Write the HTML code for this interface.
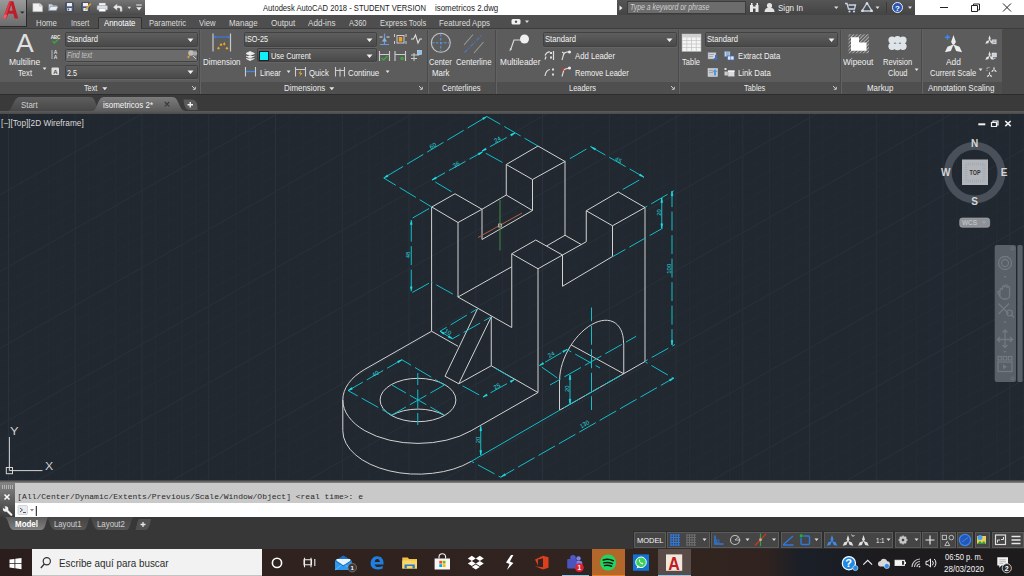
<!DOCTYPE html>
<html><head><meta charset="utf-8"><title>AutoCAD</title>
<style>
*{box-sizing:border-box;margin:0;padding:0}
html,body{width:1024px;height:576px;overflow:hidden;background:#333}
body{position:relative;font-family:"Liberation Sans","DejaVu Sans",sans-serif;font-size:9px;color:#e6e6e6}
.a{position:absolute}
.t{position:absolute;white-space:nowrap;line-height:1}
/* title */
#qat{left:0;top:0;width:145px;height:16px;background:linear-gradient(#747474,#4a4a4a);border-bottom:1px solid #333}
#title{left:145px;top:0;width:472px;height:15px;background:#fff}
#srch{left:617px;top:0;width:298px;height:15px;background:linear-gradient(#555,#444)}
#wctl{left:915px;top:0;width:109px;height:15px;background:#fff}
#menu{left:0;top:15px;width:1024px;height:14px;background:#4e4e4e}
#appbtn{left:0;top:0;width:27px;height:27px;background:linear-gradient(#9a9a9a,#6c6c6c);border-right:1px solid #2a2a2a;border-bottom:1px solid #2a2a2a}
#ribbon{left:0;top:28px;width:1024px;height:67px;background:#5c5c5c;border-top:1px solid #3c3c3c}
#ribt{left:0;top:81.5px;width:1002px;height:12.5px;background:#4f4f4f}
#tabs{left:0;top:94px;width:1024px;height:20px;background:#3a3a3a}
#draw{left:0;top:114px;width:1024px;height:366px;background:#212830}
#cmd1{left:0;top:483px;width:1024px;height:20px;background:#c9c9c9}
#cmd2{left:15px;top:503px;width:1009px;height:14px;background:#fff}
#cmdh{left:0;top:483px;width:15px;height:34px;background:linear-gradient(#848484,#3c3c3c)}
#lay{left:0;top:517px;width:1024px;height:32px;background:#373737}
#task{left:0;top:549px;width:1024px;height:27px;background:linear-gradient(90deg,#2a1d1b 0,#2f221f 262px,#32241f 700px,#30231f 765px,#1b1f27 800px,#1a1d24 835px,#1d1b1e 880px,#1e1b1d 1024px)}
.sep{position:absolute;top:29px;width:1px;height:65px;background:#444}
.dd{position:absolute;height:11px;background:linear-gradient(#4c4c4c,#3e3e3e);border:1px solid #333;border-radius:1px}
.dd i{position:absolute;right:3px;top:4px;border:2.5px solid transparent;border-top:3px solid #eee;border-bottom:0}
.mt{position:absolute;top:17px;font-size:9px;color:#ddd;white-space:nowrap;line-height:10px}
.pt{position:absolute;top:83px;font-size:8.5px;color:#e8e8e8;white-space:nowrap;line-height:10px}
.rb{position:absolute;font-size:8.5px;color:#eee;white-space:nowrap;line-height:10px}
</style></head><body>
<div class="a" id="qat"></div>
<div class="a" id="title"></div>
<div class="a" id="srch"></div>
<div class="a" id="wctl"></div>
<div class="a" id="menu"></div>
<div class="a" id="ribbon"></div>
<div class="a" id="ribt"></div>
<div class="a" id="tabs"></div>
<div class="a" id="draw"></div>
<div class="a" id="cmd1"></div>
<div class="a" id="cmd2"></div>
<div class="a" id="cmdh"></div>
<div class="a" id="lay"></div>
<div class="a" id="task"></div>
<div class="a" id="appbtn"></div>
<svg class="a" style="left:0;top:0" width="145" height="28" viewBox="0 0 145 28">
 <path d="M2.800 18.600 L9.300 1.300 L13.300 1.300 L18.200 18.600 L14.600 18.600 L13.400 13.800 L8.300 13.800 L6.600 18.600 Z M9.300 10.800 L12.700 10.800 L11.300 4.800 Z" fill="#c01c28" fill-rule="evenodd"/>
 <path d="M2.800 18.600 L9.300 1.300 L11 1.300 L5.500 18.600Z" fill="#dc3a44"/>
 <path d="M2.800 18.600l1.500-4 2.800.5-1 3.500z" fill="#e8606a"/>
 <path d="M20 11.400h4.600l-2.300 2.400z" fill="#2a2a2a"/>
 <path d="M32.800 3.300h6.800l3 2.800v5.600h-9.800z" fill="#f2f2f2" stroke="#a0a0a0" stroke-width=".5"/><path d="M39.600 3.300v2.800h3" fill="#ddd" stroke="#999" stroke-width=".4"/>
 <path d="M48.500 4h3.500l1 1.300h4v5h-8.500z" fill="#c8d0da" stroke="#6a7684" stroke-width=".5"/><path d="M48.500 10.400l2.200-4h7.600l-2.200 4z" fill="#e8eef4" stroke="#6a7684" stroke-width=".5"/>
 <rect x="65.500" y="2.600" width="8" height="8.600" rx=".8" fill="#4c5c78" stroke="#2d3a50" stroke-width=".5"/><rect x="67" y="3" width="5" height="3.300" fill="#f0f0f0"/><rect x="67.300" y="8" width="4.400" height="3" fill="#e4e6ee"/><rect x="68" y="8.600" width="1.200" height="1.800" fill="#4c5c78"/>
 <rect x="81.500" y="2.600" width="8" height="8.600" rx=".8" fill="#4c5c78" stroke="#2d3a50" stroke-width=".5"/><rect x="83" y="3" width="5" height="3.300" fill="#f0f0f0"/><rect x="83.300" y="8" width="4.400" height="3" fill="#e4e6ee"/><path d="M85.500 8.500l4.500-5.500 1.300 1-4.500 5.500-1.800.6z" fill="#eaa030"/>
 <rect x="99" y="3" width="6.600" height="3" fill="#f6f6f6" stroke="#999" stroke-width=".4"/><rect x="97" y="5.500" width="10.600" height="4.500" rx="1" fill="#d8dee6" stroke="#8a94a2" stroke-width=".5"/><rect x="99" y="8.300" width="6.600" height="3.200" fill="#fff" stroke="#999" stroke-width=".4"/>
 <path d="M113 7.200l4.200-3.600v2.200h2.600q2.400 0 2.400 2.600v3h-2.200v-2.400q0-1-1-1h-1.800v2.600z" fill="#eaeaea" stroke="#777" stroke-width=".4"/>
 <path d="M127.500 6.800h3.600l-1.800 2.200z" fill="#ddd"/>
 <path d="M136.200 4.500h5.600v1.100h-5.600z M136.200 7.200h5.600l-2.800 3.200z" fill="#f0f0f0"/>
</svg>
<div class="a" style="left:627px;top:1px;width:119px;height:13px;background:#6c6c6c;border:1px solid #3c3c3c"></div>
<svg class="a" style="left:617px;top:0" width="298" height="15" viewBox="617 0 298 15">
 <path d="M619.500 5.500l3 2.500-3 2.500z" fill="#eee"/>
 <path d="M750 5h3v7h-3z M755.500 5h3v7h-3z M751 3h1.500v2h-1.500z M756.500 3h1.500v2h-1.500z M753 6.500h2.500v2h-2.500z" fill="#e8e8e8"/>
 <circle cx="769.500" cy="5.500" r="2.600" fill="#e4e4e4"/><path d="M764.500 12q0-4.500 5-4.500t5 4.500z" fill="#e4e4e4"/>
 <path d="M834 6.500h4.500l-2.250 2.500z" fill="#ddd"/>
 <path d="M845 3.500h2l1.500 5.500h6l1-4h-7" fill="none" stroke="#c8d4e8" stroke-width="1.300"/><circle cx="849.500" cy="11.500" r="1.100" fill="#c8d4e8"/><circle cx="854" cy="11.500" r="1.100" fill="#c8d4e8"/>
 <path d="M867 3l5 8h-10z" fill="none" stroke="#c0cce0" stroke-width="1.400"/><circle cx="867" cy="3.500" r="1.300" fill="#d8e0f0"/><circle cx="862.500" cy="10.800" r="1.300" fill="#d8e0f0"/><circle cx="871.500" cy="10.800" r="1.300" fill="#d8e0f0"/>
 <path d="M875.500 6.500h4l-2 2.500z" fill="#ddd"/>
 <path d="M886.500 2v11" stroke="#3a3a3a" stroke-width="1"/>
 <circle cx="897.500" cy="7.500" r="5" fill="#2b57b0" stroke="#e8eefc" stroke-width="1"/>
 <text x="897.500" y="10.500" font-family="Liberation Sans,sans-serif" font-weight="bold" font-size="8" fill="#fff" text-anchor="middle">?</text>
 <path d="M908 6.500h4l-2 2.500z" fill="#ddd"/>
</svg>
<svg class="a" style="left:915px;top:0" width="109" height="15" viewBox="915 0 109 15">
 <path d="M940 7.500h8" stroke="#222" stroke-width="1"/>
 <path d="M971.500 5.500h6v6h-6z M973.500 5.500v-1.500h6v6h-2" fill="none" stroke="#222" stroke-width="1"/>
 <path d="M1003 3.500l8 8M1011 3.500l-8 8" stroke="#222" stroke-width="1"/>
</svg>
<div class="t" style="left:263.00px;top:4.15px;font-size:8.80px;color:#1a1a1a;transform:scaleX(0.8641);transform-origin:0 0;">Autodesk AutoCAD 2018 - STUDENT VERSION</div>
<div class="t" style="left:434.75px;top:4.15px;font-size:8.80px;color:#1a1a1a;transform:scaleX(0.8981);transform-origin:0 0;">isometricos 2.dwg</div>
<div class="t" style="left:629.50px;top:4.46px;font-size:8.20px;color:#cfcfcf;font-style:italic;transform:scaleX(0.8440);transform-origin:0 0;">Type a keyword or phrase</div>
<div class="t" style="left:778.00px;top:4.15px;font-size:8.80px;color:#ececec;transform:scaleX(0.9125);transform-origin:0 0;">Sign In</div>

<div class="a" style="left:98px;top:17px;width:44px;height:12px;background:#5c5c5c;border:1px solid #333;border-bottom:0;border-radius:2px 2px 0 0"></div>
<div class="t" style="left:36.25px;top:18.95px;font-size:8.80px;color:#dcdcdc;transform:scaleX(0.8925);transform-origin:0 0;">Home</div>
<div class="t" style="left:71.25px;top:18.95px;font-size:8.80px;color:#dcdcdc;transform:scaleX(0.8292);transform-origin:0 0;">Insert</div>
<div class="t" style="left:103.75px;top:18.95px;font-size:8.80px;color:#fff;transform:scaleX(0.8927);transform-origin:0 0;">Annotate</div>
<div class="t" style="left:149.00px;top:18.95px;font-size:8.80px;color:#dcdcdc;transform:scaleX(0.8697);transform-origin:0 0;">Parametric</div>
<div class="t" style="left:199.30px;top:18.95px;font-size:8.80px;color:#dcdcdc;transform:scaleX(0.8723);transform-origin:0 0;">View</div>
<div class="t" style="left:229.20px;top:18.95px;font-size:8.80px;color:#dcdcdc;transform:scaleX(0.8993);transform-origin:0 0;">Manage</div>
<div class="t" style="left:270.50px;top:18.95px;font-size:8.80px;color:#dcdcdc;transform:scaleX(0.9180);transform-origin:0 0;">Output</div>
<div class="t" style="left:308.00px;top:18.95px;font-size:8.80px;color:#dcdcdc;transform:scaleX(0.9216);transform-origin:0 0;">Add-ins</div>
<div class="t" style="left:348.50px;top:18.95px;font-size:8.80px;color:#dcdcdc;transform:scaleX(0.8515);transform-origin:0 0;">A360</div>
<div class="t" style="left:379.75px;top:18.95px;font-size:8.80px;color:#dcdcdc;transform:scaleX(0.8468);transform-origin:0 0;">Express Tools</div>
<div class="t" style="left:439.25px;top:18.95px;font-size:8.80px;color:#dcdcdc;transform:scaleX(0.8910);transform-origin:0 0;">Featured Apps</div>
<svg class="a" style="left:508px;top:15px" width="30" height="14" viewBox="508 15 30 14"><rect x="511.500" y="19" width="9" height="5.500" rx="1.500" fill="#f0f0f0"/><circle cx="516" cy="21.700" r="1.200" fill="#555"/><path d="M525 20.500h4l-2 2.500z" fill="#ddd"/></svg>

<div class="a" style="left:199.0px;top:30px;width:1px;height:64px;background:#4a4a4a;box-shadow:1px 0 0 #626262"></div>
<div class="a" style="left:427.0px;top:30px;width:1px;height:64px;background:#4a4a4a;box-shadow:1px 0 0 #626262"></div>
<div class="a" style="left:495.0px;top:30px;width:1px;height:64px;background:#4a4a4a;box-shadow:1px 0 0 #626262"></div>
<div class="a" style="left:677.5px;top:30px;width:1px;height:64px;background:#4a4a4a;box-shadow:1px 0 0 #626262"></div>
<div class="a" style="left:840.0px;top:30px;width:1px;height:64px;background:#4a4a4a;box-shadow:1px 0 0 #626262"></div>
<div class="a" style="left:921.0px;top:30px;width:1px;height:64px;background:#4a4a4a;box-shadow:1px 0 0 #626262"></div>
<div class="a" style="left:1002.0px;top:30px;width:1px;height:64px;background:#4a4a4a;box-shadow:1px 0 0 #626262"></div>
<div class="a" style="left:1003px;top:29px;width:21px;height:65px;background:#4a4a4a"></div>
<div class="t" style="left:15.50px;top:31.31px;font-size:25.50px;color:#e0e0e0;transform:scaleX(1.0406);transform-origin:0 0;">A</div>
<div class="t" style="left:9.25px;top:58.25px;font-size:8.80px;color:#f0f0f0;transform:scaleX(0.9681);transform-origin:0 0;">Multiline</div>
<div class="t" style="left:18.00px;top:68.85px;font-size:8.80px;color:#f0f0f0;transform:scaleX(0.8675);transform-origin:0 0;">Text</div>
<svg class="a" style="left:41.9px;top:67.1px" width="6" height="4" viewBox="0 0 6 4"><path d="M0.700 0.400h3.800l-1.900 2.500z" fill="#e4e4e4"/></svg>
<div class="a" style="left:64.5px;top:31.6px;width:133.0px;height:15.0px;background:linear-gradient(#5e5e5e,#494949);border:1px solid #424242;border-radius:1.5px;box-shadow:0 1px 0 #646464"></div><svg class="a" style="left:187.0px;top:37.6px" width="8" height="5" viewBox="0 0 8 5"><path d="M0.500 0.500h6l-3 3.500z" fill="#f2f2f2"/></svg>
<div class="t" style="left:66.50px;top:35.45px;font-size:8.80px;color:#f4f4f4;transform:scaleX(0.8679);transform-origin:0 0;">Standard</div>
<div class="a" style="left:64.5px;top:48.5px;width:133.0px;height:13.5px;background:#6b6b6b;border:1px solid #424242;border-radius:1.5px;box-shadow:0 1px 0 #646464"></div>
<div class="t" style="left:67.00px;top:51.96px;font-size:8.20px;color:#c4c4c4;font-style:italic;transform:scaleX(0.7950);transform-origin:0 0;">Find text</div>
<div class="a" style="left:64.5px;top:64.5px;width:133.0px;height:14.5px;background:linear-gradient(#5e5e5e,#494949);border:1px solid #424242;border-radius:1.5px;box-shadow:0 1px 0 #646464"></div><svg class="a" style="left:187.0px;top:70.2px" width="8" height="5" viewBox="0 0 8 5"><path d="M0.500 0.500h6l-3 3.500z" fill="#f2f2f2"/></svg>
<div class="t" style="left:67.00px;top:68.85px;font-size:8.80px;color:#f4f4f4;transform:scaleX(0.8174);transform-origin:0 0;">2.5</div>
<div class="t" style="left:84.25px;top:84.15px;font-size:8.80px;color:#ececec;transform:scaleX(0.8210);transform-origin:0 0;">Text</div>
<svg class="a" style="left:102.4px;top:87.1px" width="6" height="4" viewBox="0 0 6 4"><path d="M0.300 0.300h5l-2.500 3z" fill="#e4e4e4"/></svg>
<svg class="a" style="left:191.0px;top:85.0px" width="6" height="6" viewBox="0 0 6 6"><path d="M1 1L3.800 3.800M4.300 1.800v2.500h-2.500" stroke="#d8d8d8" stroke-width=".9" fill="none"/></svg>
<svg class="a" style="left:48px;top:30px" width="150" height="50" viewBox="48 30 150 50">
<text x="55.500" y="38.500" font-family="Liberation Sans,sans-serif" font-weight="bold" font-size="4.500" fill="#eee" text-anchor="middle">ABC</text>
<path d="M52.500 41l2 2 4-4" stroke="#3aa83a" stroke-width="1.400" fill="none"/>
<text x="55.500" y="53.500" font-family="Liberation Sans,sans-serif" font-weight="bold" font-size="5" fill="#ddd" text-anchor="middle">A</text>
<text x="55.500" y="59" font-family="Liberation Sans,sans-serif" font-weight="bold" font-size="5" fill="#ddd" text-anchor="middle">A</text>
<path d="M52 50v9" stroke="#ccc" stroke-width=".8"/>
<rect x="51.500" y="67.500" width="7.500" height="7.500" rx="1" fill="#ddd"/><text x="55.300" y="74" font-family="Liberation Sans,sans-serif" font-weight="bold" font-size="6" fill="#444" text-anchor="middle">A</text>
<circle cx="191" cy="53" r="2.800" fill="#bbb"/><circle cx="195" cy="53.500" r="2.300" fill="#aaa"/><path d="M187 57l3-2.500-1 4z" fill="#f0a020"/><path d="M193 56l3 3" stroke="#ccc" stroke-width="1"/>
</svg>
<div class="t" style="left:202.75px;top:58.25px;font-size:8.80px;color:#f0f0f0;transform:scaleX(0.9020);transform-origin:0 0;">Dimension</div>
<div class="a" style="left:243.5px;top:31.6px;width:133.0px;height:15.0px;background:linear-gradient(#5e5e5e,#494949);border:1px solid #424242;border-radius:1.5px;box-shadow:0 1px 0 #646464"></div><svg class="a" style="left:366.0px;top:37.6px" width="8" height="5" viewBox="0 0 8 5"><path d="M0.500 0.500h6l-3 3.500z" fill="#f2f2f2"/></svg>
<div class="t" style="left:245.30px;top:35.45px;font-size:8.80px;color:#f4f4f4;transform:scaleX(0.8250);transform-origin:0 0;">ISO-25</div>
<div class="a" style="left:256.5px;top:48.0px;width:120.0px;height:14.0px;background:linear-gradient(#5e5e5e,#494949);border:1px solid #424242;border-radius:1.5px;box-shadow:0 1px 0 #646464"></div><svg class="a" style="left:366.0px;top:53.5px" width="8" height="5" viewBox="0 0 8 5"><path d="M0.500 0.500h6l-3 3.500z" fill="#f2f2f2"/></svg>
<div class="a" style="left:258.5px;top:50.5px;width:10px;height:10px;background:#10f0f8;border:.5px solid #222"></div>
<div class="t" style="left:270.50px;top:51.95px;font-size:8.80px;color:#f4f4f4;transform:scaleX(0.8390);transform-origin:0 0;">Use Current</div>
<div class="t" style="left:260.00px;top:68.55px;font-size:8.80px;color:#f0f0f0;transform:scaleX(0.8503);transform-origin:0 0;">Linear</div>
<svg class="a" style="left:286.4px;top:70.1px" width="6" height="4" viewBox="0 0 6 4"><path d="M0.700 0.400h3.800l-1.900 2.500z" fill="#e4e4e4"/></svg>
<div class="t" style="left:309.00px;top:68.55px;font-size:8.80px;color:#f0f0f0;transform:scaleX(0.8802);transform-origin:0 0;">Quick</div>
<div class="t" style="left:348.30px;top:68.55px;font-size:8.80px;color:#f0f0f0;transform:scaleX(0.8857);transform-origin:0 0;">Continue</div>
<svg class="a" style="left:384.7px;top:70.1px" width="6" height="4" viewBox="0 0 6 4"><path d="M0.700 0.400h3.800l-1.900 2.500z" fill="#e4e4e4"/></svg>
<div class="t" style="left:284.00px;top:84.15px;font-size:8.80px;color:#ececec;transform:scaleX(0.8983);transform-origin:0 0;">Dimensions</div>
<svg class="a" style="left:329.2px;top:87.1px" width="6" height="4" viewBox="0 0 6 4"><path d="M0.300 0.300h5l-2.500 3z" fill="#e4e4e4"/></svg>
<svg class="a" style="left:418.3px;top:85.0px" width="6" height="6" viewBox="0 0 6 6"><path d="M1 1L3.800 3.800M4.300 1.800v2.500h-2.500" stroke="#d8d8d8" stroke-width=".9" fill="none"/></svg>
<svg class="a" style="left:200px;top:30px" width="228" height="50" viewBox="200 30 228 50">
<path d="M213 33.500v18M230.500 33.500v18" stroke="#c8c8c8" stroke-width="1.200"/><path d="M214 37h16" stroke="#3a7ad8" stroke-width="1.200"/><path d="M213.800 37l2.500-1.500v3zM230 37l-2.500-1.500v3z" fill="#3a7ad8"/>
<path d="M217 48.500l1.500-2 1.500 2-1.500 1zM219.500 45l1.500-2 1.500 2-1.500 1zM223 44l1.500-2 1 2.500-1.500 1zM225.500 48.500l1.500-2 1.500 2.500-2 .5z" fill="#f0a818"/>
<path d="M246 53.500l4-2 4.500 2-4.500 2zM246 56l4 2 4.500-2M246 58.500l4 2 4.500-2" fill="#eee" stroke="#eee" stroke-width=".8"/>
<!-- right icons row1 -->
<path d="M384.500 33.500v11M380 44.500h9" stroke="#6a9ad8" stroke-width="1.200"/><path d="M379.500 37h3M389.500 37h-3" stroke="#ddd" stroke-width="1"/><path d="M382 41.500l2.500-4 2.500 4z" fill="#8ab4e8"/>
<rect x="397" y="35.500" width="7" height="7.500" fill="none" stroke="#ccc" stroke-width="1"/><rect x="398.800" y="37" width="3.400" height="4.500" fill="#f0a020"/><path d="M394.500 34v3M394.500 41v3M406 34v3M406 41v3" stroke="#ccc" stroke-width="1"/>
<path d="M411 39h2.500l2-4 2.500 8 2-4h2" stroke="#ddd" stroke-width="1.100" fill="none"/>
<!-- row2 -->
<path d="M379.500 51v10M389.500 51v10M379.500 54.500h10" stroke="#ccc" stroke-width="1.100"/><path d="M381.500 58l2 2 4-4" stroke="#3aa83a" stroke-width="1.500" fill="none"/>
<path d="M395 51v10M405.500 51v10M395 54.500h10.500" stroke="#ccc" stroke-width="1.100"/><circle cx="402" cy="58.500" r="1.800" fill="#3aa83a"/>
<path d="M411 55h8M411 58.500h6M414 53v8" stroke="#ccc" stroke-width="1"/><rect x="417.500" y="50.500" width="4" height="4" fill="#8ac0f0" stroke="#cfe4fa" stroke-width=".6"/>
<!-- row3 icons -->
<path d="M245.500 67v9.500M255.500 67v9.500" stroke="#ccc" stroke-width="1.100"/><path d="M246 71.500h9" stroke="#3a8ae8" stroke-width="1.300"/>
<path d="M295.500 67v9.500M305.500 67v9.500M295.500 69.500h10" stroke="#ccc" stroke-width="1.100"/><path d="M301 70.500l-2.500 3h2l-1 3 3-3.500h-2z" fill="#f0a818"/>
<path d="M335.500 67v9.500M340 68.500v8M344.500 67v9.500M335.500 70.500h9" stroke="#ccc" stroke-width="1.100"/>
</svg>
<div class="t" style="left:429.30px;top:58.25px;font-size:8.80px;color:#f0f0f0;transform:scaleX(0.8594);transform-origin:0 0;">Center</div>
<div class="t" style="left:432.00px;top:68.85px;font-size:8.80px;color:#f0f0f0;transform:scaleX(0.8949);transform-origin:0 0;">Mark</div>
<div class="t" style="left:456.30px;top:58.25px;font-size:8.80px;color:#f0f0f0;transform:scaleX(0.8850);transform-origin:0 0;">Centerline</div>
<div class="t" style="left:442.00px;top:84.15px;font-size:8.80px;color:#ececec;transform:scaleX(0.8649);transform-origin:0 0;">Centerlines</div>
<svg class="a" style="left:428px;top:30px" width="67" height="26" viewBox="428 30 67 26">
<circle cx="440.800" cy="42.800" r="9.500" fill="none" stroke="#c4c4c4" stroke-width="1.100"/>
<path d="M440.800 34v17.500M432 42.800h17.500" stroke="#5a9ae8" stroke-width="1" stroke-dasharray="2.500 1.500"/>
<path d="M464 45l9-10.500M474 53l9.500-11" stroke="#999" stroke-width="1.100"/><path d="M464.500 52.500l18-18" stroke="#4a7ac8" stroke-width="1.100" stroke-dasharray="4 1.500 1.500 1.500"/>
</svg>
<div class="t" style="left:499.50px;top:58.25px;font-size:8.80px;color:#f0f0f0;transform:scaleX(0.9409);transform-origin:0 0;">Multileader</div>
<div class="a" style="left:542.5px;top:31.6px;width:134.0px;height:15.0px;background:linear-gradient(#5e5e5e,#494949);border:1px solid #424242;border-radius:1.5px;box-shadow:0 1px 0 #646464"></div><svg class="a" style="left:666.0px;top:37.6px" width="8" height="5" viewBox="0 0 8 5"><path d="M0.500 0.500h6l-3 3.500z" fill="#f2f2f2"/></svg>
<div class="t" style="left:544.50px;top:35.45px;font-size:8.80px;color:#f4f4f4;transform:scaleX(0.8679);transform-origin:0 0;">Standard</div>
<div class="t" style="left:575.00px;top:51.95px;font-size:8.80px;color:#f0f0f0;transform:scaleX(0.8790);transform-origin:0 0;">Add Leader</div>
<div class="t" style="left:575.00px;top:68.55px;font-size:8.80px;color:#f0f0f0;transform:scaleX(0.8592);transform-origin:0 0;">Remove Leader</div>
<div class="t" style="left:569.30px;top:84.15px;font-size:8.80px;color:#ececec;transform:scaleX(0.8490);transform-origin:0 0;">Leaders</div>
<svg class="a" style="left:669.5px;top:85.0px" width="6" height="6" viewBox="0 0 6 6"><path d="M1 1L3.800 3.800M4.300 1.800v2.500h-2.500" stroke="#d8d8d8" stroke-width=".9" fill="none"/></svg>
<svg class="a" style="left:496px;top:30px" width="181" height="50" viewBox="496 30 181 50">
<path d="M510.500 50l3.500-10h8" stroke="#d8d8d8" stroke-width="1.200" fill="none"/><path d="M509.500 51.500l.5-3.500 2 1z" fill="#d8d8d8"/><circle cx="524.500" cy="39" r="4.500" fill="#f0f0f0"/>
<path d="M545 55.500q2-4 5-3.500M545 59.500l1-3" stroke="#ddd" stroke-width="1.200" fill="none"/><path d="M553.500 51v9" stroke="#ddd" stroke-width="1.200"/><rect x="550" y="52" width="2" height="2" fill="#ddd"/><rect x="550" y="56.500" width="2" height="2" fill="#ddd"/>
<path d="M562 60l2-7 5-1.500M562 52l3 2" stroke="#ddd" stroke-width="1.100" fill="none"/><circle cx="569.500" cy="52" r="1.500" fill="#eee"/>
<path d="M545 76q1-6 5-6.500" stroke="#ddd" stroke-width="1.200" fill="none"/><rect x="552" y="68.500" width="2" height="2" fill="#ddd"/><rect x="552" y="73.500" width="2" height="2" fill="#ddd"/>
<path d="M562 76.500l2-7 5-1.500" stroke="#ddd" stroke-width="1.100" fill="none"/><circle cx="569.500" cy="68" r="1.500" fill="#eee"/><path d="M561.500 68l3 3M564.500 68l-3 3" stroke="#e03020" stroke-width="1"/>
</svg>
<div class="t" style="left:682.40px;top:58.25px;font-size:8.80px;color:#f0f0f0;transform:scaleX(0.8556);transform-origin:0 0;">Table</div>
<div class="a" style="left:705.0px;top:31.6px;width:133.0px;height:15.0px;background:linear-gradient(#5e5e5e,#494949);border:1px solid #424242;border-radius:1.5px;box-shadow:0 1px 0 #646464"></div><svg class="a" style="left:827.5px;top:37.6px" width="8" height="5" viewBox="0 0 8 5"><path d="M0.500 0.500h6l-3 3.500z" fill="#f2f2f2"/></svg>
<div class="t" style="left:707.30px;top:35.45px;font-size:8.80px;color:#f4f4f4;transform:scaleX(0.8679);transform-origin:0 0;">Standard</div>
<div class="t" style="left:737.50px;top:51.95px;font-size:8.80px;color:#f0f0f0;transform:scaleX(0.8736);transform-origin:0 0;">Extract Data</div>
<div class="t" style="left:737.50px;top:68.55px;font-size:8.80px;color:#f0f0f0;transform:scaleX(0.8796);transform-origin:0 0;">Link Data</div>
<div class="t" style="left:744.30px;top:84.15px;font-size:8.80px;color:#ececec;transform:scaleX(0.8373);transform-origin:0 0;">Tables</div>
<svg class="a" style="left:832.0px;top:85.0px" width="6" height="6" viewBox="0 0 6 6"><path d="M1 1L3.800 3.800M4.300 1.800v2.500h-2.500" stroke="#d8d8d8" stroke-width=".9" fill="none"/></svg>
<svg class="a" style="left:678px;top:30px" width="162" height="50" viewBox="678 30 162 50">
<rect x="682" y="34" width="19" height="17.500" fill="#f4f4f4" stroke="#aaa" stroke-width=".6"/><rect x="682" y="34" width="19" height="3.500" fill="#d0d0d0"/>
<path d="M682 40.500h19M682 44h19M682 47.500h19M686.800 37.500v14M691.500 37.500v14M696.300 37.500v14" stroke="#b8b8b8" stroke-width=".6"/>
<rect x="708" y="52.500" width="8" height="6.500" fill="#d0d4d8" stroke="#8a9098" stroke-width=".5"/><path d="M709 54.500h5M709 56.500h4" stroke="#889" stroke-width=".6"/><path d="M715 55v3h-1.500l2.200 2.500 2.200-2.500h-1.500v-3z" fill="#3a72d0"/>
<rect x="724.500" y="51.500" width="5.500" height="5" fill="#c8d0da" stroke="#6a8ac0" stroke-width=".5"/><path d="M726 53h3M726 55h3" stroke="#3a72d0" stroke-width=".7"/><rect x="727.500" y="56" width="6.500" height="4" fill="#e4e8ee" stroke="#3a6ac0" stroke-width=".7"/><path d="M730.700 56v4" stroke="#3a6ac0" stroke-width=".6"/>
<rect x="708" y="68.500" width="9.500" height="8" fill="#c4c8cc" stroke="#e0e0e0" stroke-width=".5"/><path d="M709 70.500h4M709 72.500h4" stroke="#888" stroke-width=".6"/><path d="M714 75.500v-3.500h-1.500l2.500-3 2.500 3h-1.500v3.500z" fill="#4a9ae8"/>
<rect x="724.500" y="68" width="2" height="2" fill="#ddd"/><rect x="724.500" y="71.500" width="4" height="4" fill="#ccc"/><rect x="728" y="70.500" width="6.500" height="6" fill="#d8dce0" stroke="#888" stroke-width=".5"/><rect x="728" y="70.500" width="6.500" height="1.500" fill="#f4f4f4"/>
</svg>
<div class="t" style="left:843.00px;top:58.25px;font-size:8.80px;color:#f0f0f0;transform:scaleX(0.9386);transform-origin:0 0;">Wipeout</div>
<div class="t" style="left:883.20px;top:58.25px;font-size:8.80px;color:#f0f0f0;transform:scaleX(0.8652);transform-origin:0 0;">Revision</div>
<div class="t" style="left:887.50px;top:68.85px;font-size:8.80px;color:#f0f0f0;transform:scaleX(0.8481);transform-origin:0 0;">Cloud</div>
<svg class="a" style="left:913.9px;top:67.6px" width="6" height="4" viewBox="0 0 6 4"><path d="M0.700 0.400h3.800l-1.900 2.500z" fill="#e4e4e4"/></svg>
<div class="t" style="left:867.20px;top:84.15px;font-size:8.80px;color:#ececec;transform:scaleX(0.8997);transform-origin:0 0;">Markup</div>
<svg class="a" style="left:841px;top:30px" width="80" height="26" viewBox="841 30 80 26">
<defs><pattern id="hat" width="2.500" height="2.500" patternUnits="userSpaceOnUse" patternTransform="rotate(-45)"><rect width="2.500" height="1" fill="#b0b0b0"/></pattern></defs>
<rect x="848.500" y="34.300" width="20.500" height="19" fill="url(#hat)"/>
<path d="M851 37.200h8v5.200h7.500v8.400h-15.500z" fill="#fff"/>
<g fill="#dfe4e8"><circle cx="892" cy="40" r="3.600"/><circle cx="897.500" cy="39.600" r="3.600"/><circle cx="903" cy="40" r="3.600"/><circle cx="892" cy="46.300" r="3.600"/><circle cx="897.500" cy="46.700" r="3.600"/><circle cx="903" cy="46.300" r="3.600"/></g>
</svg>
<div class="t" style="left:946.20px;top:58.25px;font-size:8.80px;color:#f0f0f0;transform:scaleX(0.9516);transform-origin:0 0;">Add</div>
<div class="t" style="left:930.20px;top:68.85px;font-size:8.80px;color:#f0f0f0;transform:scaleX(0.8587);transform-origin:0 0;">Current Scale</div>
<svg class="a" style="left:977.9px;top:67.6px" width="6" height="4" viewBox="0 0 6 4"><path d="M0.700 0.400h3.800l-1.900 2.500z" fill="#e4e4e4"/></svg>
<div class="t" style="left:928.40px;top:84.15px;font-size:8.80px;color:#ececec;transform:scaleX(0.9061);transform-origin:0 0;">Annotation Scaling</div>
<svg class="a" style="left:922px;top:30px" width="80" height="50" viewBox="922 30 80 50">
<path d="M953.50 35.10 L955.90 42.10 L953.50 46.10 L951.10 42.10Z M953.50 44.60 L950.90 51.00 L944.90 52.20 L947.50 46.80Z M953.50 44.60 L956.10 51.00 L962.10 52.20 L959.50 46.80Z" fill="#ececec"/><path d="M947.500 34.800v5M945 37.300h5" stroke="#3a8af0" stroke-width="1.400"/><path d="M989.60 35.25 L990.80 38.75 L989.60 40.75 L988.40 38.75Z M989.60 40.00 L988.30 43.20 L985.30 43.80 L986.60 41.10Z M989.60 40.00 L990.90 43.20 L993.90 43.80 L992.60 41.10Z" fill="#e4e4e4"/><rect x="992" y="39.500" width="4.500" height="4.500" fill="#d8dce0" stroke="#999" stroke-width=".4"/><path d="M993 41h2.500M993 42.500h2.500" stroke="#667" stroke-width=".5"/><path d="M989.60 51.25 L990.80 54.75 L989.60 56.75 L988.40 54.75Z M989.60 56.00 L988.30 59.20 L985.30 59.80 L986.60 57.10Z M989.60 56.00 L990.90 59.20 L993.90 59.80 L992.60 57.10Z" fill="#e4e4e4"/><rect x="992" y="53" width="4.500" height="4" fill="#c8d0d8" stroke="#eee" stroke-width=".5"/><path d="M993.500 58.500h2" stroke="#ddd" stroke-width=".7"/><path d="M994.00 66.46 L994.77 68.70 L994.00 69.98 L993.23 68.70Z M994.00 69.50 L993.17 71.55 L991.25 71.93 L992.08 70.20Z M994.00 69.50 L994.83 71.55 L996.75 71.93 L995.92 70.20Z" fill="#e4e4e4"/><path d="M989.50 71.46 L990.27 73.70 L989.50 74.98 L988.73 73.70Z M989.50 74.50 L988.67 76.55 L986.75 76.93 L987.58 75.20Z M989.50 74.50 L990.33 76.55 L992.25 76.93 L991.42 75.20Z" fill="#e4e4e4"/><path d="M987 71v-3.500h3" stroke="#ccc" stroke-width=".8" stroke-dasharray="1.200 .8" fill="none"/>
</svg>

<div class="a" style="left:0;top:94px;width:1024px;height:1px;background:#2c2c2c"></div>
<div class="a" style="left:0;top:110.5px;width:1024px;height:3.5px;background:linear-gradient(#5c5c5c,#4a4a4a)"></div>
<svg class="a" style="left:0;top:95px" width="210" height="17" viewBox="0 95 210 17">
<defs><linearGradient id="tg1" x1="0" y1="0" x2="0" y2="1"><stop offset="0" stop-color="#5e5e5e"/><stop offset="1" stop-color="#474747"/></linearGradient>
<linearGradient id="tg2" x1="0" y1="0" x2="0" y2="1"><stop offset="0" stop-color="#7c7c7c"/><stop offset="1" stop-color="#5c5c5c"/></linearGradient></defs>
<path d="M7 111 C13 111 13 97 20 97 H90 C97 97 95 111 102 111Z" fill="url(#tg1)"/>
<path d="M92 111 C98 111 97 97 104 97 H172 C180 97 178 111 186 111Z" fill="url(#tg2)"/>
<path d="M183.500 99.500 H191 C197 99.500 197.500 104 197.500 110 H190 C185 110 184 105 183.500 99.500Z" fill="#5a5a5a"/>
<path d="M187.500 104.800h5.500M190.250 102v5.500" stroke="#f0f0f0" stroke-width="1.400"/>
<path d="M164.800 102l4.400 4.400M169.200 102l-4.400 4.400" stroke="#3c3c3c" stroke-width="1.300"/>
</svg>
<div class="t" style="left:20.60px;top:100.95px;font-size:8.80px;color:#d0d0d0;transform:scaleX(0.8986);transform-origin:0 0;">Start</div>
<div class="t" style="left:103.10px;top:100.95px;font-size:8.80px;color:#f4f4f4;transform:scaleX(0.9048);transform-origin:0 0;">isometricos 2*</div>

<svg class="a" style="left:0;top:114px" width="1024" height="366" viewBox="0 114 1024 366">
<path d="M21.9 114V482 M35.2 114V482 M48.6 114V482 M61.9 114V482 M88.6 114V482 M101.9 114V482 M115.3 114V482 M128.6 114V482 M155.3 114V482 M168.7 114V482 M182.0 114V482 M195.4 114V482 M222.1 114V482 M235.4 114V482 M248.8 114V482 M262.1 114V482 M288.8 114V482 M302.2 114V482 M315.6 114V482 M328.9 114V482 M355.6 114V482 M369.0 114V482 M382.3 114V482 M395.7 114V482 M422.4 114V482 M435.7 114V482 M449.1 114V482 M462.4 114V482 M489.1 114V482 M502.5 114V482 M515.8 114V482 M529.2 114V482 M555.9 114V482 M569.2 114V482 M582.6 114V482 M595.9 114V482 M622.6 114V482 M636.0 114V482 M649.3 114V482 M662.7 114V482 M689.4 114V482 M702.7 114V482 M716.1 114V482 M729.4 114V482 M756.1 114V482 M769.5 114V482 M782.8 114V482 M796.2 114V482 M822.9 114V482 M836.2 114V482 M849.6 114V482 M862.9 114V482 M889.6 114V482 M903.0 114V482 M916.3 114V482 M929.7 114V482 M956.4 114V482 M969.7 114V482 M983.1 114V482 M996.4 114V482 M1023.1 114V482 M0 210.1L1024 -372.5 M0 225.5L1024 -357.2 M0 240.8L1024 -341.8 M0 256.2L1024 -326.5 M0 286.9L1024 -295.8 M0 302.2L1024 -280.4 M0 317.6L1024 -265.1 M0 332.9L1024 -249.7 M0 363.6L1024 -219.0 M0 379.0L1024 -203.7 M0 394.3L1024 -188.3 M0 409.7L1024 -173.0 M0 440.4L1024 -142.3 M0 455.7L1024 -126.9 M0 471.1L1024 -111.6 M0 486.4L1024 -96.2 M0 517.1L1024 -65.5 M0 532.5L1024 -50.2 M0 547.8L1024 -34.8 M0 563.2L1024 -19.5 M0 593.9L1024 11.2 M0 609.2L1024 26.6 M0 624.6L1024 41.9 M0 639.9L1024 57.3 M0 670.6L1024 88.0 M0 686.0L1024 103.3 M0 701.3L1024 118.7 M0 716.7L1024 134.0 M0 747.4L1024 164.7 M0 762.7L1024 180.1 M0 778.1L1024 195.4 M0 793.4L1024 210.8 M0 824.1L1024 241.5 M0 839.5L1024 256.8 M0 854.8L1024 272.2 M0 870.2L1024 287.5 M0 900.9L1024 318.2 M0 916.2L1024 333.6 M0 931.6L1024 348.9 M0 946.9L1024 364.3 M0 977.6L1024 395.0 M0 993.0L1024 410.3 M0 1008.3L1024 425.7 M0 1023.7L1024 441.0 M0 1054.4L1024 471.7" stroke="#252c35" stroke-width="1" fill="none"/>
<path d="M8.5 114V482 M75.2 114V482 M142.0 114V482 M208.7 114V482 M275.5 114V482 M342.3 114V482 M409.0 114V482 M475.8 114V482 M542.5 114V482 M609.3 114V482 M676.0 114V482 M742.8 114V482 M809.5 114V482 M876.3 114V482 M943.0 114V482 M1009.8 114V482 M0 194.8L1024 -387.9 M0 271.5L1024 -311.1 M0 348.3L1024 -234.4 M0 425.0L1024 -157.6 M0 501.8L1024 -80.9 M0 578.5L1024 -4.1 M0 655.3L1024 72.6 M0 732.0L1024 149.4 M0 808.8L1024 226.1 M0 885.5L1024 302.9 M0 962.3L1024 379.6 M0 1039.0L1024 456.4" stroke="#29313a" stroke-width="1" fill="none"/>
<path d="M431.75 207.00L455.00 193.75 M455.00 193.75L482.00 209.25 M482.00 209.25L458.00 222.50 M458.00 222.50L431.75 207.00 M431.60 207.00L431.60 331.25 M458.00 222.50L458.00 297.00 M482.00 209.25L482.00 239.50 M482.00 209.25L506.25 195.00 M506.25 195.00L532.50 210.50 M532.50 210.50L482.00 239.50 M506.25 164.50L538.00 146.00 M538.00 146.00L565.00 161.50 M565.00 161.50L532.50 179.50 M532.50 179.50L506.25 164.50 M506.25 164.50L506.25 195.00 M532.50 179.50L532.50 210.50 M565.00 161.50L565.00 235.25 M565.00 235.25L546.50 246.00 M565.00 235.25L581.25 244.50 M535.75 240.00L562.50 255.00 M562.50 255.00L586.25 241.75 M586.25 210.75L586.25 241.75 M618.25 192.00L645.00 207.50 M645.00 207.50L612.50 225.75 M612.50 225.75L586.25 210.75 M586.25 210.75L618.25 192.00 M645.00 207.50L645.00 361.50 M612.50 225.75L612.50 256.50 M612.50 256.50L562.50 286.25 M562.50 255.00L562.50 286.25 M511.75 253.75L535.75 240.00 M562.50 255.00L538.00 268.75 M538.00 268.75L511.75 253.75 M511.75 253.75L511.75 327.50 M538.00 268.75L538.00 392.50 M458.00 297.00L511.75 266.75 M458.00 297.00L511.75 327.50 M431.60 331.25L364.80 369.30 M431.60 331.25L458.00 346.25 M477.50 308.75L445.00 376.25 M491.25 316.75L458.75 383.75 M491.25 316.75L491.25 365.75 M445.00 376.25L458.75 383.75 M458.75 383.75L491.25 365.75 M491.25 365.75L538.00 392.50 M538.00 392.50L471.20 430.70 M342.80 400.00L342.80 430.70 M559.50 380.00L559.50 410.00 M623.75 343.00L623.75 373.75 M571.25 345.00L623.75 373.75 M560.00 410.00L645.00 361.50 M364.8 369.3A75.2 43.4 0 0 0 471.2 430.7 M342.8 430.7A75.2 43.4 0 0 0 471.2 461.4 M391.4 415.35A37.9 21.7 0 0 1 444.6 415.35 M623.56 343.05 L623.38 339.29 L622.86 335.78 L621.99 332.55 L620.79 329.64 L619.27 327.07 L617.45 324.88 L615.35 323.10 L612.98 321.73 L610.38 320.80 L607.58 320.32 L604.60 320.29 L601.48 320.70 L598.24 321.57 L594.94 322.87 L591.60 324.60 L588.26 326.73 L584.96 329.24 L581.72 332.11 L578.60 335.29 L575.62 338.77 L572.82 342.49 L570.22 346.42 L567.85 350.52 L565.75 354.74 L563.93 359.03 L562.41 363.35 L561.21 367.64 L560.34 371.87 L559.82 375.99 L559.64 379.95" stroke="#d2d2d2" stroke-width="1" fill="none"/>
<ellipse cx="418" cy="400" rx="37.9" ry="21.7" stroke="#d2d2d2" stroke-width="1" fill="none"/>
<g stroke="#12bec8" stroke-width="1" fill="none" stroke-dasharray="19 4.5">
<path d="M383.75 178.00L486.90 116.50" stroke-dashoffset="19.95"/>
<path d="M486.90 116.50L538.00 146.00" stroke-dashoffset="3.50"/>
<path d="M383.75 178.00L431.75 207.00" stroke-dashoffset="4.96"/>
<path d="M432.00 180.00L482.50 152.00" stroke-dashoffset="4.13"/>
<path d="M432.00 180.00L455.00 193.75" stroke-dashoffset="19.60"/>
<path d="M481.90 151.10L515.00 133.00" stroke-dashoffset="14.14"/>
<path d="M481.90 151.10L506.25 164.50" stroke-dashoffset="19.10"/>
<path d="M591.25 147.00L643.75 177.00" stroke-dashoffset="2.77"/>
<path d="M565.00 161.50L591.25 146.25" stroke-dashoffset="17.82"/>
<path d="M618.25 192.00L643.75 177.50" stroke-dashoffset="18.33"/>
<path d="M645.00 207.50L673.75 190.75" stroke-dashoffset="16.36"/>
<path d="M612.50 256.75L662.50 228.25" stroke-dashoffset="4.22"/>
<path d="M672.00 191.25L672.00 345.00" stroke-dashoffset="3.12"/>
<path d="M645.00 361.25L675.00 344.50" stroke-dashoffset="15.82"/>
<path d="M431.75 207.00L410.00 219.50" stroke-dashoffset="20.46"/>
<path d="M431.25 282.00L410.00 293.75" stroke-dashoffset="20.86"/>
<path d="M431.25 282.00L458.00 297.00" stroke-dashoffset="17.67"/>
<path d="M411.25 220.00L411.25 291.25" stroke-dashoffset="20.88"/>
<path d="M477.50 308.75L440.00 331.25" stroke-dashoffset="11.13"/>
<path d="M491.25 316.75L452.50 338.75" stroke-dashoffset="10.72"/>
<path d="M348.10 390.60L401.90 359.75" stroke-dashoffset="1.99"/>
<path d="M348.10 390.60L391.90 415.00" stroke-dashoffset="7.93"/>
<path d="M401.90 359.75L444.40 385.00" stroke-dashoffset="8.28"/>
<path d="M391.90 415.00L444.40 385.00" stroke-dashoffset="2.77"/>
<path d="M391.90 385.00L444.40 415.00" stroke-dashoffset="2.77"/>
<path d="M417.75 373.00L417.75 425.00" stroke-dashoffset="7.00"/>
<path d="M483.00 397.00L514.50 379.50" stroke-dashoffset="14.98"/>
<path d="M483.00 397.00L458.75 383.75" stroke-dashoffset="19.18"/>
<path d="M514.50 379.50L491.25 365.75" stroke-dashoffset="19.49"/>
<path d="M501.25 476.75L673.75 378.00" stroke-dashoffset="4.12"/>
<path d="M471.25 461.25L501.25 477.50" stroke-dashoffset="15.94"/>
<path d="M645.50 362.00L673.75 378.50" stroke-dashoffset="16.64"/>
<path d="M539.50 365.50L567.00 349.50" stroke-dashoffset="17.09"/>
<path d="M539.50 365.50L559.50 379.50" stroke-dashoffset="20.79"/>
<path d="M567.00 349.50L600.00 368.00" stroke-dashoffset="14.08"/>
<path d="M591.50 307.50L591.50 410.00" stroke-dashoffset="5.25"/>
<path d="M636.25 336.25L550.00 385.00" stroke-dashoffset="6.96"/>
<path d="M623.75 373.75L560.00 410.00" stroke-dashoffset="19.83"/>
</g>
<path d="M661.75 198.00L661.75 228.25 M440.00 331.25L452.50 338.75 M480.75 426.25L480.75 455.00 M570.00 375.00L570.00 403.75 M471.20 461.40L560.00 410.00" stroke="#12bec8" stroke-width="1" fill="none"/>
<path d="M383.75 178.00L388.08 176.47L387.15 174.92Z M486.90 116.50L482.57 118.03L483.50 119.58Z M432.00 180.00L436.37 178.61L435.50 177.03Z M482.50 152.00L478.13 153.39L479.00 154.97Z M481.90 151.10L486.28 149.73L485.42 148.15Z M515.00 133.00L510.62 134.37L511.48 135.95Z M591.25 147.00L594.71 150.01L595.60 148.45Z M643.75 177.00L640.29 173.99L639.40 175.55Z M661.75 198.00L660.85 202.50L662.65 202.50Z M661.75 228.25L662.65 223.75L660.85 223.75Z M672.00 191.25L671.10 195.75L672.90 195.75Z M672.00 345.00L672.90 340.50L671.10 340.50Z M411.25 220.00L410.35 224.50L412.15 224.50Z M411.25 291.25L412.15 286.75L410.35 286.75Z M440.00 331.25L443.40 334.34L444.32 332.79Z M452.50 338.75L449.10 335.66L448.18 337.21Z M348.10 390.60L352.45 389.14L351.56 387.58Z M401.90 359.75L397.55 361.21L398.44 362.77Z M483.00 397.00L487.37 395.60L486.50 394.03Z M514.50 379.50L510.13 380.90L511.00 382.47Z M480.75 426.25L479.85 430.75L481.65 430.75Z M480.75 455.00L481.65 450.50L479.85 450.50Z M501.25 476.75L505.60 475.30L504.71 473.73Z M673.75 378.00L669.40 379.45L670.29 381.02Z M539.50 365.50L543.84 364.01L542.94 362.46Z M567.00 349.50L562.66 350.99L563.56 352.54Z M570.00 375.00L569.10 379.50L570.90 379.50Z M570.00 403.75L570.90 399.25L569.10 399.25Z" fill="#20e0e8" stroke="#20e0e8" stroke-width="0.5"/>
<text x="433.00" y="145.75" transform="rotate(-30 433.00 145.75)" font-family="Liberation Sans,sans-serif" font-size="6" fill="#30d0d8" text-anchor="middle" dominant-baseline="central">60</text>
<text x="456.25" y="164.50" transform="rotate(-30 456.25 164.50)" font-family="Liberation Sans,sans-serif" font-size="6" fill="#30d0d8" text-anchor="middle" dominant-baseline="central">36</text>
<text x="497.50" y="139.50" transform="rotate(-30 497.50 139.50)" font-family="Liberation Sans,sans-serif" font-size="6" fill="#30d0d8" text-anchor="middle" dominant-baseline="central">24</text>
<text x="618.25" y="160.00" transform="rotate(30 618.25 160.00)" font-family="Liberation Sans,sans-serif" font-size="6" fill="#30d0d8" text-anchor="middle" dominant-baseline="central">45</text>
<text x="659.25" y="212.50" transform="rotate(-90 659.25 212.50)" font-family="Liberation Sans,sans-serif" font-size="6" fill="#30d0d8" text-anchor="middle" dominant-baseline="central">20</text>
<text x="668.75" y="268.75" transform="rotate(-90 668.75 268.75)" font-family="Liberation Sans,sans-serif" font-size="6" fill="#30d0d8" text-anchor="middle" dominant-baseline="central">100</text>
<text x="408.00" y="255.00" transform="rotate(-90 408.00 255.00)" font-family="Liberation Sans,sans-serif" font-size="6" fill="#30d0d8" text-anchor="middle" dominant-baseline="central">48</text>
<text x="448.00" y="332.00" transform="rotate(30 448.00 332.00)" font-family="Liberation Sans,sans-serif" font-size="6" fill="#30d0d8" text-anchor="middle" dominant-baseline="central">10</text>
<text x="375.50" y="373.75" transform="rotate(-30 375.50 373.75)" font-family="Liberation Sans,sans-serif" font-size="6" fill="#30d0d8" text-anchor="middle" dominant-baseline="central">40</text>
<text x="497.00" y="386.25" transform="rotate(-30 497.00 386.25)" font-family="Liberation Sans,sans-serif" font-size="6" fill="#30d0d8" text-anchor="middle" dominant-baseline="central">25</text>
<text x="478.00" y="440.00" transform="rotate(-90 478.00 440.00)" font-family="Liberation Sans,sans-serif" font-size="6" fill="#30d0d8" text-anchor="middle" dominant-baseline="central">20</text>
<text x="584.50" y="424.25" transform="rotate(-30 584.50 424.25)" font-family="Liberation Sans,sans-serif" font-size="6" fill="#30d0d8" text-anchor="middle" dominant-baseline="central">130</text>
<text x="551.25" y="354.50" transform="rotate(-30 551.25 354.50)" font-family="Liberation Sans,sans-serif" font-size="6" fill="#30d0d8" text-anchor="middle" dominant-baseline="central">24</text>
<text x="566.75" y="388.75" transform="rotate(-90 566.75 388.75)" font-family="Liberation Sans,sans-serif" font-size="6" fill="#30d0d8" text-anchor="middle" dominant-baseline="central">20</text>
<path d="M500 200V250.5" stroke="#3f8a3f" stroke-width="1"/>
<path d="M478 237.5L522 213" stroke="#b06045" stroke-width="1"/>
<rect x="498.5" y="224" width="3" height="3" stroke="#ccc" stroke-width="0.7" fill="none"/>
<path d="M9.400 437V470.600H42.500" stroke="#d4d4d4" stroke-width="1" fill="none"/><rect x="6.300" y="467.500" width="6.200" height="6.200" stroke="#d4d4d4" stroke-width="1" fill="none"/>
<text x="14.200" y="435.200" font-family="Liberation Sans,sans-serif" font-size="11.300" fill="#cfcfcf" text-anchor="middle" textLength="8.600" lengthAdjust="spacingAndGlyphs">Y</text>
<text x="49" y="469.900" font-family="Liberation Sans,sans-serif" font-size="10.600" fill="#cfcfcf" text-anchor="middle" textLength="8.200" lengthAdjust="spacingAndGlyphs">X</text>
<circle cx="974.600" cy="172.600" r="26.800" fill="none" stroke="#495059" stroke-width="7.800"/>
<rect x="962" y="159.500" width="26" height="25.500" fill="#b2b5b9"/>
<rect x="966" y="164" width="18" height="17" fill="none" stroke="#a4abb6" stroke-width="2.500" stroke-dasharray="1 1"/>
<rect x="959.700" y="218" width="30" height="9.300" rx="2.500" fill="#8e9298" stroke="#a8acb2" stroke-width=".6"/>
<path d="M981.500 221h5l-2.500 3.500z" fill="#9aa0a8"/>
<path d="M978.300 124.300h7" stroke="#f0f0f0" stroke-width="2"/>
<path d="M991.500 122.500h5v4h-5zM993 122.500v-1.500h5v4h-1.500" stroke="#f0f0f0" stroke-width="1.200" fill="none"/>
<path d="M1005.300 121l5.400 5.200M1010.700 121l-5.400 5.200" stroke="#f0f0f0" stroke-width="1.600"/>
<rect x="994.700" y="245" width="21.300" height="137" rx="2" fill="#596068"/>
<rect x="1017.400" y="245" width="5.200" height="137" rx="1.500" fill="#596068"/>
<g stroke="#727981" fill="none" stroke-width="1.300"><circle cx="1005" cy="263" r="6.500"/><circle cx="1005" cy="263" r="3.500"/>
<path d="M1000 296v-6q0-1.500 1.200-1.500t1.200 1.500v-2.500q0-1.500 1.200-1.500t1.200 1.500v-1q0-1.500 1.200-1.500t1.200 1.500v1.500q0-1.500 1.200-1.500t1.200 1.500v7q0 4-3.500 4h-2.500q-2.500 0-4.500-4l-1.500-3q1.200-1.200 2.400 0z"/>
<path d="M998.500 303.500l10 10M1009 303.500l-10.500 10.500"/><circle cx="1009.500" cy="313" r="2.800"/><path d="M1011.500 315l2.500 2.500"/>
<path d="M1005 330v17M997.500 339.500h15M1002.500 332.500l2.500-2.500 2.500 2.500M1002.500 345l2.500 2.500 2.500-2.500M1000 337l-2.500 2.500 2.500 2.500M1010 337l2.500 2.500-2.500 2.500"/>
<rect x="998" y="356.500" width="3.500" height="3.500"/><rect x="1003.200" y="356.500" width="3.500" height="3.500"/><rect x="1008.400" y="356.500" width="3.500" height="3.500"/><rect x="998" y="362" width="14" height="9.500"/>
</g><path d="M1003 364.300v5l4-2.500z" fill="#727981"/>
<path d="M1003.500 276h3l-1.500 2zM1003.500 321.500h3l-1.500 2zM1003.500 351h3l-1.500 2z" fill="#727981"/>
<circle cx="1012.500" cy="248.500" r="1.500" fill="none" stroke="#727981" stroke-width=".8"/><circle cx="1012.500" cy="378.500" r="1.500" fill="none" stroke="#727981" stroke-width=".8"/>
<text x="974.600" y="147" font-family="Liberation Sans,sans-serif" font-weight="bold" font-size="10" fill="#d6d6d6" text-anchor="middle">N</text>
<text x="974.600" y="205.200" font-family="Liberation Sans,sans-serif" font-weight="bold" font-size="10" fill="#d6d6d6" text-anchor="middle">S</text>
<text x="945.800" y="176.200" font-family="Liberation Sans,sans-serif" font-weight="bold" font-size="10" fill="#d6d6d6" text-anchor="middle">W</text>
<text x="1004" y="176.200" font-family="Liberation Sans,sans-serif" font-weight="bold" font-size="10" fill="#d6d6d6" text-anchor="middle">E</text>
<text x="975" y="174.800" font-family="Liberation Sans,sans-serif" font-weight="bold" font-size="6.500" fill="#333" text-anchor="middle" textLength="11" lengthAdjust="spacingAndGlyphs">TOP</text>
<text x="962" y="225.300" font-family="Liberation Sans,sans-serif" font-size="6.500" fill="#d0d0d0" textLength="15" lengthAdjust="spacingAndGlyphs">WCS</text>

</svg>
<div class="t" style="left:1.30px;top:118.55px;font-size:8.80px;color:#dadada;transform:scaleX(0.9369);transform-origin:0 0;">[−][Top][2D Wireframe]</div>

<div class="a" style="left:0;top:480px;width:1024px;height:3px;background:linear-gradient(#3a3a3a,#8a8a8a)"></div>
<svg class="a" style="left:0;top:483px" width="40" height="34" viewBox="0 483 40 34">
<g fill="#b4b4b4"><rect x="2" y="485" width="1" height="4"/><rect x="4" y="485" width="1" height="4"/><rect x="6" y="485" width="1" height="4"/><rect x="8" y="485" width="1" height="4"/><rect x="10" y="485" width="1" height="4"/><rect x="12" y="485" width="1" height="4"/></g>
<path d="M4.500 494.500l5 5M9.500 494.500l-5 5" stroke="#fff" stroke-width="1.500"/>
<path d="M7 510.500L11.300 514.800" stroke="#f2f2f2" stroke-width="2.200" stroke-linecap="round"/><circle cx="5.600" cy="509" r="2.700" fill="#f2f2f2"/><path d="M5.600 509L2 507.500 4 505.400z" fill="#585858"/><path d="M4.900 508.300L2.500 505.900" stroke="#585858" stroke-width="1.600"/>
<rect x="18" y="505.500" width="9.500" height="9" rx="1" fill="#e8ecf0" stroke="#b8c0c8" stroke-width=".6"/>
<path d="M20 508l2.500 2-2.500 2M23 512.500h3" stroke="#555" stroke-width="1" fill="none"/>
<path d="M30 509h4l-2 2.500z" fill="#888"/>
<path d="M36.300 506v10" stroke="#111" stroke-width="1"/>
</svg>
<div class="t" style="left:17.30px;top:493.43px;font-size:8.00px;color:#2a2a2a;font-family:'Liberation Mono',monospace;">[All/Center/Dynamic/Extents/Previous/Scale/Window/Object] &lt;real time&gt;: e</div>

<svg class="a" style="left:0;top:517px" width="160" height="14" viewBox="0 517 160 14">
<defs><linearGradient id="lg1" x1="0" y1="0" x2="0" y2="1"><stop offset="0" stop-color="#5a5a5a"/><stop offset="1" stop-color="#808080"/></linearGradient>
<linearGradient id="lg2" x1="0" y1="0" x2="0" y2="1"><stop offset="0" stop-color="#444"/><stop offset="1" stop-color="#555"/></linearGradient></defs>
<path d="M4 517 C9 517 8 530 14 530 H41 C47 530 45 517 50 517Z" fill="url(#lg1)"/>
<path d="M47 517 C50 520 50 530 56 530 H83 C88 530 87 520 90.500 517Z" fill="url(#lg2)"/>
<path d="M90 517 C93 520 93 530 99 530 H126 C131 530 130 520 133.500 517Z" fill="url(#lg2)"/>
<path d="M140 519 H151 C150 524 149 530 145 530 H135.500 C137 526 137 519 140 519Z" fill="#505050"/>
<path d="M140.500 524.500h5M143 522v5" stroke="#e8e8e8" stroke-width="1.300"/>
</svg>
<div class="t" style="left:15.00px;top:520.05px;font-size:8.80px;color:#fff;font-weight:bold;transform:scaleX(0.9048);transform-origin:0 0;">Model</div>
<div class="t" style="left:53.80px;top:520.05px;font-size:8.80px;color:#d0d0d0;transform:scaleX(0.8781);transform-origin:0 0;">Layout1</div>
<div class="t" style="left:96.90px;top:520.05px;font-size:8.80px;color:#d0d0d0;transform:scaleX(0.8909);transform-origin:0 0;">Layout2</div>
<div class="a" style="left:633px;top:531px;width:391px;height:17.5px;background:#2e2e2e"></div>
<div class="a" style="left:634.3px;top:531.5px;width:31.3px;height:16.5px;background:#454545;border:1px solid #5b5b5b"></div>
<div class="a" style="left:667.0px;top:531.5px;width:42.8px;height:16.5px;background:#454545;border:1px solid #5b5b5b"></div>
<div class="a" style="left:711.0px;top:531.5px;width:68.4px;height:16.5px;background:#454545;border:1px solid #5b5b5b"></div>
<div class="a" style="left:780.8px;top:531.5px;width:41.6px;height:16.5px;background:#454545;border:1px solid #5b5b5b"></div>
<div class="a" style="left:823.8px;top:531.5px;width:69.5px;height:16.5px;background:#454545;border:1px solid #5b5b5b"></div>
<div class="a" style="left:894.7px;top:531.5px;width:26.3px;height:16.5px;background:#454545;border:1px solid #5b5b5b"></div>
<div class="a" style="left:922.2px;top:531.5px;width:16.1px;height:16.5px;background:#454545;border:1px solid #5b5b5b"></div>
<div class="a" style="left:939.6px;top:531.5px;width:16.2px;height:16.5px;background:#454545;border:1px solid #5b5b5b"></div>
<div class="a" style="left:957.2px;top:531.5px;width:16.2px;height:16.5px;background:#454545;border:1px solid #5b5b5b"></div>
<div class="a" style="left:974.8px;top:531.5px;width:15.6px;height:16.5px;background:#454545;border:1px solid #5b5b5b"></div>
<div class="a" style="left:991.6px;top:531.5px;width:32.9px;height:16.5px;background:#454545;border:1px solid #5b5b5b"></div>
<div class="t" style="left:636.50px;top:537.03px;font-size:8.00px;color:#f4f4f4;transform:scaleX(0.9315);transform-origin:0 0;">MODEL</div>
<div class="t" style="left:875.50px;top:537.25px;font-size:7.50px;color:#f0f0f0;transform:scaleX(0.8153);transform-origin:0 0;">1:1</div>
<svg class="a" style="left:633px;top:531px" width="391" height="17" viewBox="633 531 391 17">

<g fill="#e0e0e0"><path d="M702.500 538.500h4l-2 2.500zM745.500 538.500h4l-2 2.500zM772 538.500h4l-2 2.500zM814.500 538.500h4l-2 2.500zM886.500 538.500h4l-2 2.500zM914.500 538.500h4l-2 2.500z"/></g>
<g stroke="#2f78e0" stroke-width="1" fill="none"><path d="M670 535h10M670 537.500h10M670 540h10M670 542.500h10M670 545h10M671 534v12M673.500 534v12M676 534v12M678.500 534v12"/></g>
<g stroke="#707070" stroke-width=".9" fill="none"><path d="M686 535h10M686 537.500h10M686 540h10M686 542.500h10M686 545h10M687 534v12M689.500 534v12M692 534v12M694.500 534v12"/></g>
<path d="M715 535.500v8.500h8.500" stroke="#2f78e0" stroke-width="1.500" fill="none"/><rect x="716.500" y="540" width="2.500" height="2.500" fill="none" stroke="#2f78e0" stroke-width=".7"/>
<circle cx="735" cy="540" r="4.500" stroke="#c0c0c0" stroke-width="1.100" fill="none"/><path d="M735 540h5.500M735 540l3.500-3" stroke="#c0c0c0" stroke-width=".9"/>
<path d="M760.500 533.500v12.500" stroke="#3aa03a" stroke-width="1.200"/><path d="M755 545.500l11-11.500" stroke="#d83020" stroke-width="1.300"/><rect x="759.300" y="538.500" width="2.400" height="2.400" fill="#bbb"/>
<path d="M783 545l10-9M783 545h10.500" stroke="#2f78e0" stroke-width="1.400" fill="none"/>
<rect x="801" y="536" width="8.500" height="8.500" rx="1" stroke="#2f78e0" stroke-width="1.400" fill="none"/><rect x="799.500" y="534" width="3.500" height="3.500" fill="#3aa03a" stroke="#153" stroke-width=".5"/>
<path d="M832.00 535.11 L833.49 539.45 L832.00 541.93 L830.51 539.45Z M832.00 541.00 L830.39 544.97 L826.67 545.71 L828.28 542.36Z M832.00 541.00 L833.61 544.97 L837.33 545.71 L835.72 542.36Z" fill="#3a8af0"/><path d="M848.00 535.11 L849.49 539.45 L848.00 541.93 L846.51 539.45Z M848.00 541.00 L846.39 544.97 L842.67 545.71 L844.28 542.36Z M848.00 541.00 L849.61 544.97 L853.33 545.71 L851.72 542.36Z" fill="#e0e0e0"/><path d="M851.500 534.500l1.200 1.800 1.800-.8" stroke="#ddd" stroke-width=".9" fill="none"/><path d="M863.50 535.11 L864.99 539.45 L863.50 541.93 L862.01 539.45Z M863.50 541.00 L861.89 544.97 L858.17 545.71 L859.78 542.36Z M863.50 541.00 L865.11 544.97 L868.83 545.71 L867.22 542.36Z" fill="#e0e0e0"/>
<circle cx="903" cy="540" r="2.800" fill="none" stroke="#c8c8c8" stroke-width="1.800"/><path d="M903 535.500v9M898.500 540h9M899.800 536.800l6.400 6.400M906.200 536.800l-6.400 6.400" stroke="#c8c8c8" stroke-width="1.300"/><circle cx="903" cy="540" r="1.300" fill="#454545"/>
<path d="M925.500 540h9M930 535.500v9" stroke="#e8e8e8" stroke-width="1.200"/>
<rect x="942.300" y="535.300" width="4.200" height="4.200" stroke="#c8c8c8" stroke-width=".9" fill="none"/><circle cx="951.300" cy="537.600" r="2.300" stroke="#c8c8c8" stroke-width=".9" fill="none"/><path d="M944.800 545.600h5l-2.500-4.300z" stroke="#c8c8c8" stroke-width=".9" fill="none"/>
<circle cx="965" cy="540" r="5.600" fill="#2458b8" stroke="#3a86f0" stroke-width="1.300"/><path d="M962 542l6-4.500" stroke="#3a86f0" stroke-width="1"/>
<rect x="977" y="536" width="9" height="8" fill="#e8d060"/><circle cx="980" cy="537.500" r="2.500" fill="#4aa0e8"/><path d="M977 544l3-3 2 2 2-2 2 3z" fill="#3a9a3a"/>
<rect x="995.500" y="535" width="10" height="9.500" fill="none" stroke="#e0e0e0" stroke-width="1.200"/><path d="M997.500 542.500v-2.500h2.500M1003.500 537v2.500h-2.500" stroke="#e0e0e0" stroke-width="1" fill="none"/>
<path d="M1011.500 536.500h9M1011.500 540h9M1011.500 543.500h9" stroke="#e8e8e8" stroke-width="1.400"/>
</svg>

<div class="a" style="left:32px;top:549px;width:229.500px;height:27px;background:#f2f2f2;border-bottom:1.500px solid #c4c4c4"></div>
<div class="a" style="left:592.200px;top:549px;width:32.400px;height:27px;background:#b4672a;border-bottom:1.500px solid #f08424"></div>
<div class="a" style="left:657.800px;top:549px;width:32.800px;height:27px;background:#594b47;border-bottom:1.500px solid #8cc4ee"></div>
<div class="a" style="left:561.600px;top:574.500px;width:27.200px;height:1.500px;background:#8cc4ee"></div>
<div class="t" style="left:59.00px;top:557.59px;font-size:11.00px;color:#2c2c2c;transform:scaleX(0.8954);transform-origin:0 0;">Escribe aquí para buscar</div>
<div class="t" style="left:945.00px;top:552.82px;font-size:8.60px;color:#f4f4f4;transform:scaleX(0.8832);transform-origin:0 0;">06:50 p. m.</div>
<div class="t" style="left:944.20px;top:565.02px;font-size:8.60px;color:#f4f4f4;transform:scaleX(0.9316);transform-origin:0 0;">28/03/2020</div>
<svg class="a" style="left:0;top:549px" width="1024" height="27" viewBox="0 549 1024 27">
<path d="M9.500 559.600l5-.7v4.300h-5zM15.300 558.800l6.200-.9v5.300h-6.200zM9.500 563.900h5v4.300l-5-.7zM15.300 563.900h6.200v5.300l-6.200-.9z" fill="#fff"/>
<circle cx="46.800" cy="561.300" r="3.600" fill="none" stroke="#333" stroke-width="1.200"/><path d="M44.300 564l-3.500 4" stroke="#333" stroke-width="1.300"/>
<circle cx="277" cy="562.900" r="4.600" fill="none" stroke="#fff" stroke-width="1.600"/>
<path d="M304 559.800h7.500v5h-7.500zM304.500 557.800v9.500M311 557.800v9.500M314.800 559v7" stroke="#f0f0f0" stroke-width="1.100" fill="none"/>
<path d="M335 560.500l8.400-5 8.300 5v9.500h-16.700z" fill="#1a6fc4"/><path d="M335 561l8.400 5.500 8.300-5.500v9h-16.700z" fill="#2b9af0"/><path d="M336.500 560.800l6.900 4.400 6.900-4.400v-1.800h-13.800z" fill="#e8f2fc"/><path d="M335 570l6.500-5M351.700 570l-6.500-5" stroke="#7cc4ff" stroke-width=".7"/>
<circle cx="352.200" cy="567.600" r="4.300" fill="#3a3a3a" stroke="#888" stroke-width=".7"/>
<path d="M370.600 563.500c0-4.500 3-7.200 6.700-7.200c4 0 6.200 2.800 6.200 6.800v1.300h-8.800c.3 1.700 1.600 2.600 3.600 2.600c1.600 0 3-.4 4.400-1.200v2.600c-1.500.7-3.100 1-5 1c-4.300 0-7.100-2.300-7.100-5.900zM374.800 561.900h5c0-1.700-.9-2.900-2.600-2.900c-1.300 0-2.200 1-2.400 2.900z" fill="#1e7fe0"/>
<path d="M402.300 557.500h5.500l1.200 1.500h8v9.500h-14.700z" fill="#f2c246"/><path d="M402.300 560.500h14.700v8h-14.700z" fill="#f8d66a"/><path d="M404.500 568.500v-4h10.300v4h-2.300v-2.500h-5.700v2.500z" fill="#2a7ad0"/>
<path d="M434.600 558.500h15.400v11h-15.400z" fill="#f6f6f6"/><path d="M439 558.500v-1.500a3.300 3.300 0 0 1 6.600 0v1.500" fill="none" stroke="#f6f6f6" stroke-width="1.100"/>
<rect x="439.300" y="560.800" width="2.800" height="2.800" fill="#f25022"/><rect x="442.700" y="560.800" width="2.800" height="2.800" fill="#7fba00"/><rect x="439.300" y="564.200" width="2.800" height="2.800" fill="#00a4ef"/><rect x="442.700" y="564.200" width="2.800" height="2.800" fill="#ffb900"/>
<path d="M471.800 555.800l4 2.600-4 2.500-4-2.500zM479.800 555.800l4 2.600-4 2.500-4-2.500zM471.800 560.900l4 2.600-4 2.500-4-2.500zM479.800 560.900l4 2.600-4 2.500-4-2.500zM475.800 564.400l4 2.500-4 2.500-4-2.500z" fill="#fff"/>
<path d="M511 555l2.400 0-3.500 6.500 3.500 1.500-6.500 7 2.600-6-3.500-1.500z" fill="#fff"/>
<path d="M535 559.500l8-3.700 5.500 1.500v10.500l-5.500 1.600-8-3.200 8 1v-9l-5 1.300v6z" fill="#dc3e1e"/>
<circle cx="578.500" cy="558.500" r="2.200" fill="#7b83eb"/><circle cx="573" cy="557.800" r="2.800" fill="#5059c9"/><rect x="575" y="561" width="7.200" height="6" rx="1.500" fill="#7b83eb"/><rect x="567.200" y="559" width="9.500" height="9.500" rx="1" fill="#4b53bc"/>
<circle cx="579.400" cy="567.600" r="4.400" fill="#e02030"/>
<circle cx="608.100" cy="562.500" r="8" fill="#1ed760"/><path d="M603.300 560q5-1.600 10 .8M603.800 562.900q4.400-1.300 8.600.7M604.500 565.600q3.600-1 7 .6" stroke="#111" stroke-width="1.500" fill="none" stroke-linecap="round"/>
<rect x="633" y="554.400" width="16" height="16.400" fill="#1273d4"/><circle cx="641" cy="562.300" r="5.300" fill="#3ad05a" stroke="#fff" stroke-width="1"/><path d="M636.500 568.500l1.200-3.200 2 1.800z" fill="#fff"/><path d="M638.800 560.200q.5 3 3.600 4.200l1-1-1.300-.9-.7.500q-1.300-.7-1.700-1.900l.6-.6-.7-1.300z" fill="#fff"/>
<rect x="666" y="554.400" width="16.200" height="16.400" fill="#f2e6da"/>
<circle cx="848.900" cy="563.200" r="6.600" fill="#1f8ae6" stroke="#fff" stroke-width="1.200"/><circle cx="855.300" cy="568" r="2.600" fill="#2a8ae0" stroke="#cfe6ff" stroke-width=".6"/>
<path d="M863.300 564.700l4.400-4.400 4.400 4.400" stroke="#f0f0f0" stroke-width="1.100" fill="none"/>
<path d="M880 566.500a2.800 2.800 0 0 1 .5-5.500a3.600 3.600 0 0 1 6.800.3a2.600 2.600 0 0 1 0 5.200z" fill="#d8d8d8"/><circle cx="886.800" cy="566" r="2.600" fill="#3a8ae0" stroke="#fff" stroke-width=".5"/>
<rect x="895" y="560.200" width="9.500" height="5.400" fill="#f4f4f4" stroke="#f4f4f4" stroke-width=".8"/><rect x="902" y="561" width="2" height="3.800" fill="#333"/><rect x="905" y="561.800" width="1" height="2.200" fill="#f4f4f4"/>
<path d="M912 567a8 8 0 0 1 8-8M914.500 567a5.500 5.500 0 0 1 5.500-5.500M917 567a3 3 0 0 1 3-3" stroke="#c8c8c8" stroke-width="1.100" fill="none"/><circle cx="919.500" cy="566.600" r=".9" fill="#ddd"/>
<path d="M926 561.300h2l2.500-2.300v8l-2.500-2.300h-2z" fill="none" stroke="#f0f0f0" stroke-width="1"/><path d="M932.300 560.800a3.300 3.300 0 0 1 0 4.600M934.300 559a6 6 0 0 1 0 8.200" stroke="#f0f0f0" stroke-width="1" fill="none"/>
<path d="M997.300 557.300h10.700v8.300h-6.500l-2.200 2.200v-2.200h-2z" fill="#f4f4f4"/><path d="M999.300 559.800h6.700M999.300 561.800h6.700M999.300 563.600h4" stroke="#888" stroke-width=".6"/>
<circle cx="1006.800" cy="568.200" r="4.600" fill="#2a2a2a" stroke="#e0e0e0" stroke-width=".8"/>
<text x="352.200" y="570" font-family="Liberation Sans,sans-serif" font-weight="bold" font-size="6" fill="#fff" text-anchor="middle">1</text>
<text x="579.400" y="570" font-family="Liberation Sans,sans-serif" font-weight="bold" font-size="6.500" fill="#fff" text-anchor="middle">1</text>
<text x="1006.800" y="570.700" font-family="Liberation Sans,sans-serif" font-weight="bold" font-size="7" fill="#fff" text-anchor="middle">2</text>
<text x="848.700" y="567" font-family="Liberation Sans,sans-serif" font-weight="bold" font-size="11" fill="#fff" text-anchor="middle">?</text>
<text x="674.100" y="569.500" font-family="Liberation Sans,sans-serif" font-weight="bold" font-size="18" fill="#c01c28" text-anchor="middle" textLength="11.500" lengthAdjust="spacingAndGlyphs">A</text>
</svg>

</body></html>
